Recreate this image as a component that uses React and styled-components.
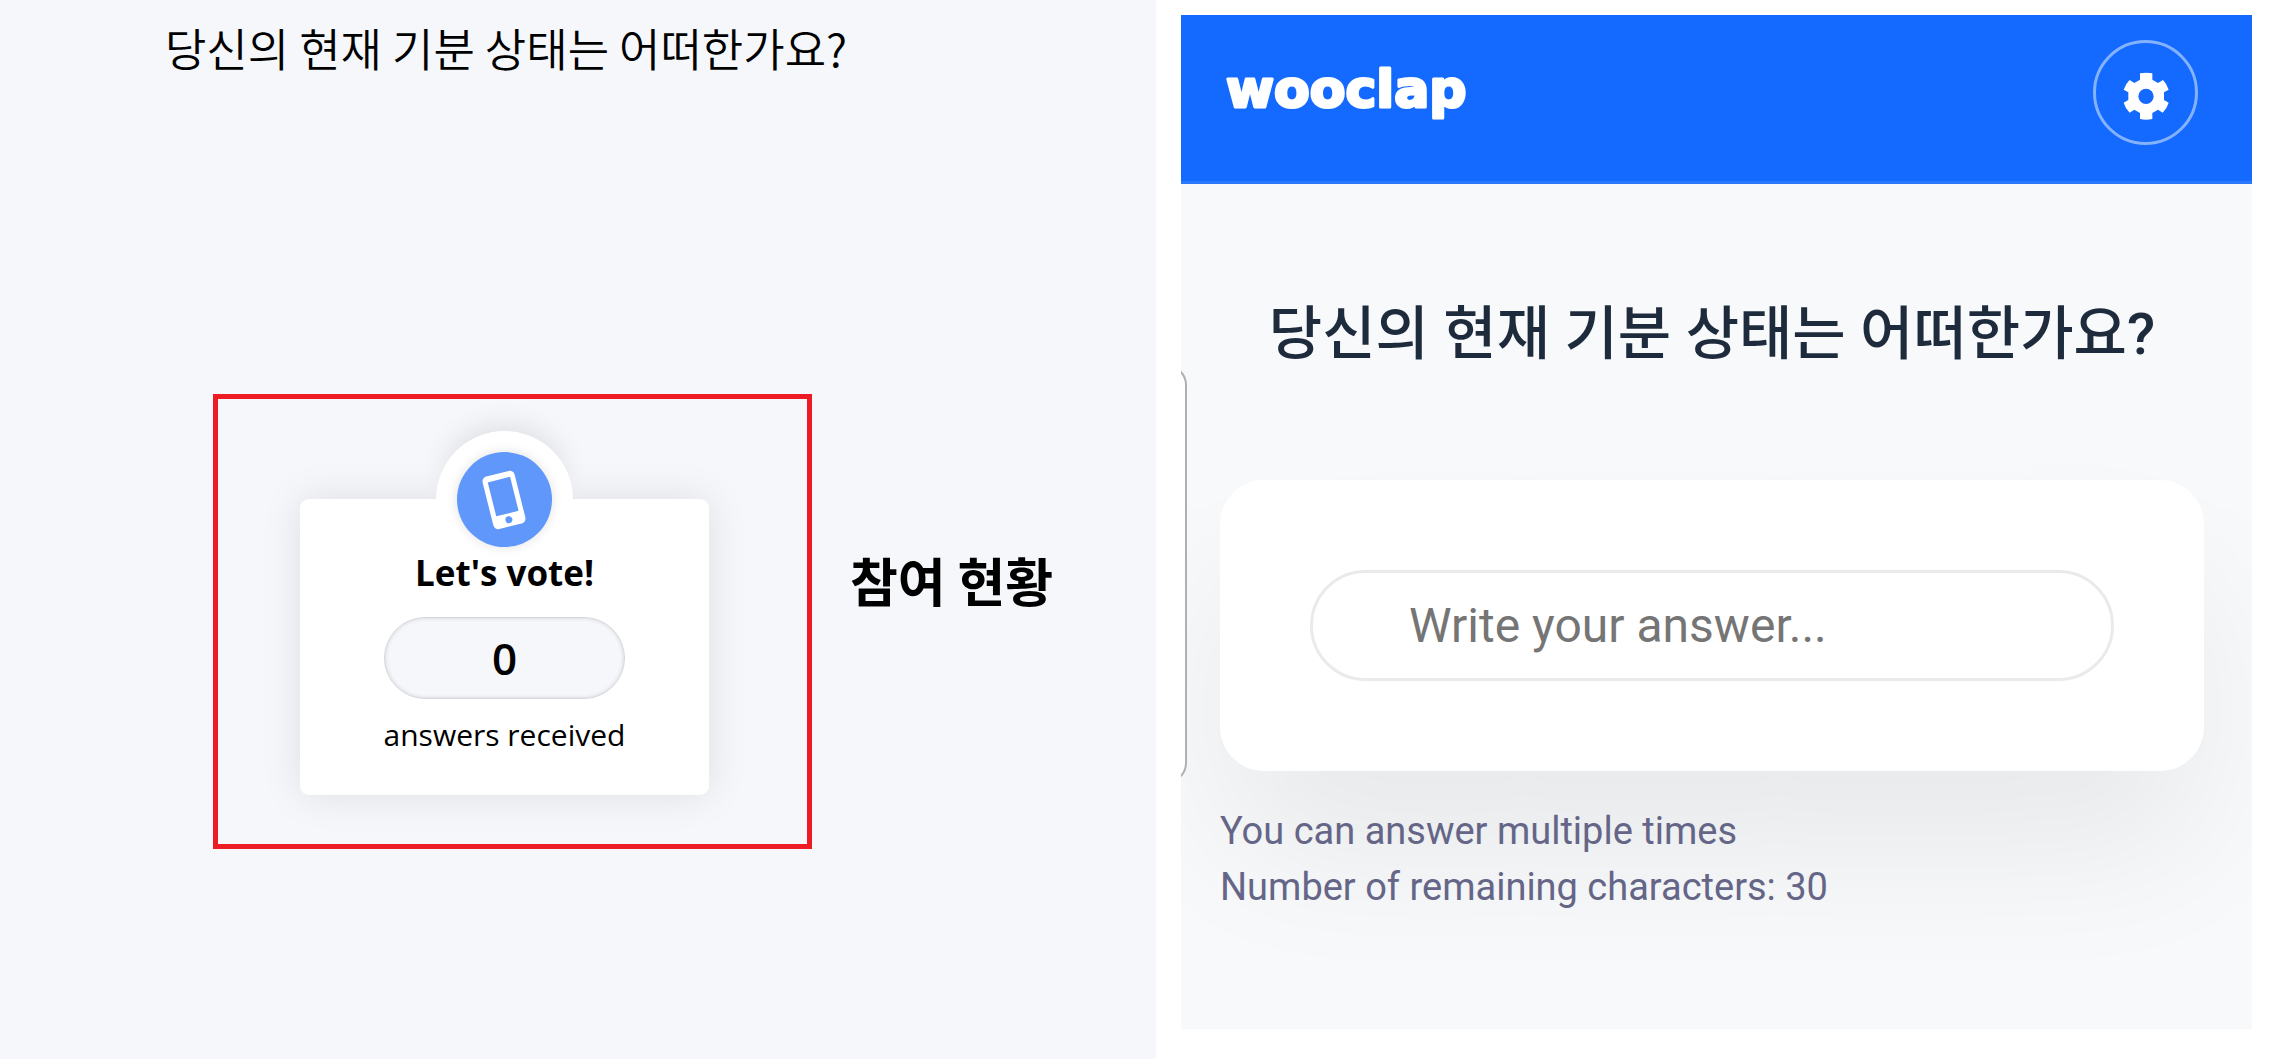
import { useState } from "react";
import styled, { createGlobalStyle } from "styled-components";

const GlobalStyle = createGlobalStyle`
  * {
    box-sizing: border-box;
  }
  body {
    margin: 0;
    background: #ffffff;
    font-family: "Open Sans", "Noto Sans CJK KR", sans-serif;
    color: #000000;
  }
  h1, h2, p {
    margin: 0;
  }
`;

const MAX_LENGTH = 30;

export default function App() {
  return (
    <Page>
      <GlobalStyle />
      <Presenter />
      <Participant />
    </Page>
  );
}

function Presenter() {
  return (
    <PresenterPanel>
      <PresenterTitle>당신의 현재 기분 상태는 어떠한가요?</PresenterTitle>
      <StatusRow>
        <Frame>
          <VoteCard>
            <Badge>
              <BadgeCircle>
                <PhoneIcon />
              </BadgeCircle>
            </Badge>
            <VoteTitle>Let's vote!</VoteTitle>
            <Counter>0</Counter>
            <VoteText>answers received</VoteText>
          </VoteCard>
        </Frame>
        <StatusLabel>참여 현황</StatusLabel>
      </StatusRow>
    </PresenterPanel>
  );
}

function Participant() {
  const [answer, setAnswer] = useState("");

  return (
    <ParticipantArea>
      <Phone>
        <Header>
          <Logo />
          <SettingsButton type="button" aria-label="Settings">
            <GearIcon />
          </SettingsButton>
        </Header>
        <Content>
          <SideTab />
          <Question>당신의 현재 기분 상태는 어떠한가요?</Question>
          <AnswerCard>
            <AnswerInput
              type="text"
              aria-label="Write your answer..."
              placeholder="Write your answer..."
              maxLength={MAX_LENGTH}
              value={answer}
              onChange={(event) => setAnswer(event.target.value)}
            />
          </AnswerCard>
          <Hints>
            <p>You can answer multiple times</p>
            <p>Number of remaining characters: {MAX_LENGTH - answer.length}</p>
          </Hints>
        </Content>
      </Phone>
    </ParticipantArea>
  );
}

function PhoneIcon() {
  return (
    <svg width="60" height="60" viewBox="-30 -30 60 60" aria-hidden="true">
      <g transform="rotate(-14)">
        <path
          fill="#ffffff"
          fillRule="evenodd"
          d="M-11.500 -27H11.500A5 5 0 0 1 16.500 -22V22A5 5 0 0 1 11.500 27H-11.500A5 5 0 0 1 -16.500 22V-22A5 5 0 0 1 -11.500 -27ZM-11.500 -21V14H11.500V-21ZM0 16.800A3.500 3.500 0 1 0 0 23.800A3.500 3.500 0 1 0 0 16.800Z"
        />
      </g>
    </svg>
  );
}

function GearIcon() {
  return (
    <svg width="48" height="48" viewBox="184 215 144 144" aria-hidden="true">
      <path
        fill="#ffffff"
        fillRule="evenodd"
        d="M238 219Q256 215 275 219V238L292 248L307 239Q319 251 324 268L310 276V299L324 307Q319 324 306 337L292 328L275 338V356Q256 360 238 356V338L221 328L207 337Q194 324 189 307L203 299V276L189 268Q194 251 207 239L221 248L238 238ZM256 265A23 23 0 1 0 256 311A23 23 0 1 0 256 265Z"
      />
    </svg>
  );
}

function Logo() {
  return (
    <svg width="260" height="90" viewBox="0 0 260 90" role="img" aria-label="wooclap">
      <text
        x="5"
        y="59"
        fontFamily="'DejaVu Sans', sans-serif"
        fontSize="52"
        fontWeight="700"
        fill="#ffffff"
        stroke="#ffffff"
        strokeWidth="3"
        strokeLinejoin="round"
      >
        wooclap
      </text>
    </svg>
  );
}

const Page = styled.main`
  display: grid;
  grid-template-columns: 1156fr 1123fr;
  min-height: 100vh;
`;

const PresenterPanel = styled.section`
  background: #f5f7fb;
  padding-top: 15px;
`;

const PresenterTitle = styled.h2`
  padding-right: 144px;
  text-align: center;
  font-family: "Noto Sans CJK KR", sans-serif;
  font-size: 45px;
  line-height: 66px;
  font-weight: 350;
`;

const StatusRow = styled.div`
  display: grid;
  grid-template-columns: 599fr 306fr;
  column-gap: 38px;
  align-items: center;
  margin-top: 313px;
  padding-left: 213px;
`;

const Frame = styled.div`
  border: 5px solid #ed1c24;
  padding: 100px 16px 49px 0;
`;

const VoteCard = styled.div`
  position: relative;
  display: flex;
  flex-direction: column;
  align-items: center;
  max-width: 409px;
  margin: 0 auto;
  padding: 50px 24px 36px;
  border-radius: 9px;
  background: #ffffff;
  box-shadow: 0 0 40px rgba(0, 0, 0, 0.1);
`;

/* white bump that sticks out above the card */
const Badge = styled.div`
  position: absolute;
  top: -68px;
  left: 50%;
  width: 137px;
  height: 69px;
  margin-left: -69px;
  padding-top: 21px;
  display: flex;
  justify-content: center;
  border-radius: 69px 69px 0 0;
  background: #ffffff;
  box-shadow: 0 -12px 28px -8px rgba(0, 0, 0, 0.1);
`;

const BadgeCircle = styled.div`
  flex: none;
  width: 95px;
  height: 95px;
  display: flex;
  align-items: center;
  justify-content: center;
  border-radius: 50%;
  background: #5f97fb;
  box-shadow: 0 0 12px rgba(0, 0, 0, 0.12);
`;

const VoteTitle = styled.h2`
  position: relative;
  font-size: 35px;
  line-height: 48px;
  font-weight: 700;
`;

const Counter = styled.div`
  width: 241px;
  height: 82px;
  margin: 20px 0 12px;
  border: 1px solid #d5d6d9;
  border-radius: 41px;
  background: #f5f7fb;
  box-shadow: inset 0 0 4px rgba(0, 0, 0, 0.15);
  text-align: center;
  font-size: 44px;
  line-height: 80px;
  font-weight: 600;
`;

const VoteText = styled.p`
  font-size: 30px;
  line-height: 48px;
`;

const StatusLabel = styled.p`
  padding-bottom: 84px;
  font-family: "Noto Sans CJK KR", sans-serif;
  font-size: 52px;
  line-height: 72px;
  font-weight: 700;
`;

const ParticipantArea = styled.section`
  padding: 15px 27px 30px 25px;
`;

const Phone = styled.div`
  height: 100%;
  overflow: hidden;
  background: #f7f9fb;
  font-family: Roboto, "Noto Sans CJK KR", sans-serif;
`;

const Header = styled.header`
  display: flex;
  align-items: center;
  justify-content: space-between;
  padding: 25px 54px 36px 40px;
  border-bottom: 3px solid #2b78fc;
  background: #146aff;
`;

const SettingsButton = styled.button`
  width: 105px;
  height: 105px;
  display: flex;
  align-items: center;
  justify-content: center;
  padding: 6px 0 0;
  border: 3px solid #84b2ff;
  border-radius: 50%;
  background: transparent;
  cursor: pointer;
`;

const Content = styled.div`
  position: relative;
  padding: 108px 48px 114px 39px;
`;

const SideTab = styled.span`
  position: absolute;
  top: 181px;
  left: -34px;
  width: 40px;
  height: 418px;
  border: 2px solid #b0b0b0;
  border-radius: 20px;
  background: #ffffff;
`;

const Question = styled.h1`
  text-align: center;
  font-size: 58px;
  line-height: 84px;
  font-weight: 500;
  color: #1e2b3c;
`;

const AnswerCard = styled.div`
  margin-top: 104px;
  padding: 90px;
  border-radius: 44px;
  background: #ffffff;
  box-shadow: 0 85px 150px -10px rgba(0, 0, 0, 0.07);
`;

const AnswerInput = styled.input`
  display: block;
  width: 100%;
  height: 111px;
  padding: 0 96px;
  border: 3px solid #eaeaea;
  border-radius: 56px;
  outline: none;
  background: #ffffff;
  font-family: inherit;
  font-size: 48px;
  color: #1e2b3c;
  &::placeholder {
    color: #757575;
    opacity: 1;
  }
`;

const Hints = styled.div`
  position: relative;
  margin-top: 32px;
  font-size: 38px;
  line-height: 56px;
  color: #656587;
`;
